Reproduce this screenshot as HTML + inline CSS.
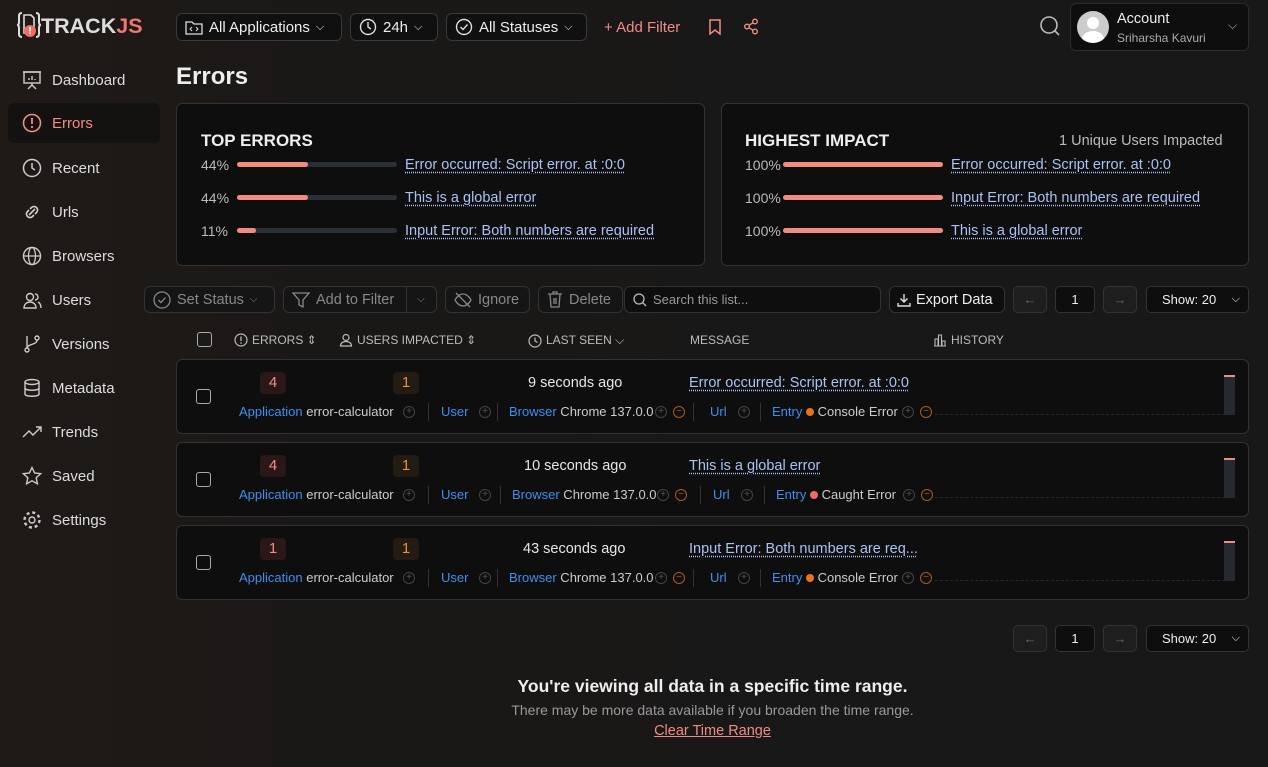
<!DOCTYPE html>
<html><head><meta charset="utf-8"><style>
*{box-sizing:border-box;margin:0;padding:0}
body{width:1268px;height:767px;overflow:hidden;background:linear-gradient(90deg,#201a17 0%,#1a1817 25%,#181818 100%);font-family:"Liberation Sans",sans-serif;color:#e6e6e6;position:relative;font-size:14px}
.a{position:absolute;white-space:nowrap}
.btn{position:absolute;border:1px solid #3a3a3a;border-radius:6px;background:#101010;display:flex;align-items:center;gap:6px;padding:0 8px;font-size:15px;color:#eee;height:28px;white-space:nowrap}
.nav{position:absolute;left:8px;width:152px;height:40px;display:flex;align-items:center;padding-left:14px;gap:10px;font-size:15px;color:#ddd;border-radius:6px}
.card{position:absolute;background:#0e0e0e;border:1px solid #333;border-radius:6px}
.lnk{color:#a9c3f5;text-decoration:underline dotted;text-underline-offset:3px}
.bar{position:absolute;height:5px;border-radius:3px;background:#2b2f36}
.bar i{display:block;height:5px;border-radius:3px;background:#f28b82}
.tb{position:absolute;border:1px solid #333;border-radius:6px;height:27px;display:flex;align-items:center;gap:6px;padding:0 8px;color:#888;font-size:14.5px;background:#151515;white-space:nowrap}
.th{position:absolute;top:333px;font-size:12px;color:#bbb;display:flex;align-items:center;gap:4px}
.cb{position:absolute;width:15px;height:15px;border:1.5px solid #aaa;border-radius:3px}
.m{position:absolute;font-size:13px;white-space:nowrap;color:#ccc}
.b{color:#3d8ff0}
.pc{position:absolute;width:12px;height:12px;border:1px solid #444;border-radius:50%;text-align:center;font-size:10px;line-height:10px;color:#555}
.mc{position:absolute;width:12px;height:12px;border:1px solid #b0581a;border-radius:50%;text-align:center;font-size:10px;line-height:10px;color:#b0581a}
.sep{position:absolute;width:1px;height:18px;background:#333}
.dot{display:inline-block;width:8px;height:8px;border-radius:50%;vertical-align:0}
.pg{position:absolute;height:27px;border:1px solid #333;border-radius:5px;display:flex;align-items:center;justify-content:center;font-size:13px}
</style></head><body>
<!-- logo -->
<div class="a" style="left:17px;top:11px;font-size:21.5px;font-weight:bold;color:#ddd">
<svg width="24" height="28" viewBox="0 0 24 28" style="vertical-align:-6px"><path d="M5 2 Q2 2 2 5 V11 Q2 14 0 14 Q2 14 2 17 V23 Q2 26 5 26" stroke="#ddd" stroke-width="2" fill="none"/><path d="M19 2 Q22 2 22 5 V11 Q22 14 24 14 Q22 14 22 17 V23 Q22 26 19 26" stroke="#ddd" stroke-width="2" fill="none"/><path d="M7 4 H14 L17 7 V22 H7Z" stroke="#ddd" stroke-width="1.6" fill="none"/><circle cx="13" cy="20" r="6" fill="#f06b62"/><rect x="12.2" y="16" width="1.6" height="4.5" fill="#fff"/><rect x="12.2" y="21.5" width="1.6" height="1.6" fill="#fff"/></svg><span>TRACK<span style="color:#f0766e">JS</span></span></div>
<!-- top bar -->
<div class="btn" style="left:176px;top:13px;width:166px"><svg width="18" height="16" viewBox="0 0 18 16"><path d="M1 3h6l2 2h8v10H1z" stroke="#ddd" fill="none" stroke-width="1.3"/><path d="M7 8l-2 2 2 2M11 8l2 2-2 2" stroke="#ddd" fill="none"/></svg>All Applications <span style="font-size:11px">⌵</span></div>
<div class="btn" style="left:350px;top:13px;width:88px"><svg width="18" height="18"><circle cx="9" cy="9" r="7.5" stroke="#ddd" fill="none" stroke-width="1.4"/><path d="M9 4v5l3 2" stroke="#ddd" fill="none" stroke-width="1.4"/></svg>24h <span style="font-size:11px">⌵</span></div>
<div class="btn" style="left:446px;top:13px;width:141px"><svg width="18" height="18"><circle cx="9" cy="9" r="7.5" stroke="#ddd" fill="none" stroke-width="1.4"/><path d="M5.5 9l2.5 2.5 4.5-5" stroke="#ddd" fill="none" stroke-width="1.4"/></svg>All Statuses <span style="font-size:11px">⌵</span></div>
<div class="a" style="left:604px;top:19px;color:#f28b82;font-size:15px">+ Add Filter</div>
<svg class="a" style="left:708px;top:19px" width="14" height="16"><path d="M2 1h10v14l-5-4-5 4z" stroke="#f28b82" fill="none" stroke-width="1.5"/></svg>
<svg class="a" style="left:743px;top:18px" width="16" height="17"><circle cx="12" cy="3.5" r="2.3" stroke="#f28b82" fill="none" stroke-width="1.4"/><circle cx="4" cy="8.5" r="2.3" stroke="#f28b82" fill="none" stroke-width="1.4"/><circle cx="12" cy="13.5" r="2.3" stroke="#f28b82" fill="none" stroke-width="1.4"/><path d="M6 7.3l4-2.5M6 9.7l4 2.5" stroke="#f28b82" stroke-width="1.4"/></svg>
<svg class="a" style="left:1039px;top:15px" width="22" height="22"><circle cx="10" cy="10" r="8" stroke="#bbb" fill="none" stroke-width="1.6"/><path d="M16 16l4 4" stroke="#bbb" stroke-width="1.6"/></svg>
<div class="a" style="left:1070px;top:3px;width:179px;height:48px;border:1px solid #2c2c2c;border-radius:6px;background:#0e0e0e"></div>
<div class="a" style="left:1077px;top:11px;width:32px;height:32px;border-radius:50%;background:#ccc;overflow:hidden"><div style="position:absolute;left:10px;top:6px;width:12px;height:12px;border-radius:50%;background:#fff"></div><div style="position:absolute;left:5px;top:20px;width:22px;height:16px;border-radius:50%;background:#fff"></div></div>
<div class="a" style="left:1117px;top:11px;font-size:14.5px;color:#eee">Account</div>
<div class="a" style="left:1117px;top:31px;font-size:12px;color:#aaa">Sriharsha Kavuri</div>
<div class="a" style="left:1228px;top:18px;font-size:12px;color:#aaa">⌵</div>
<!-- sidebar -->
<div class="nav" style="top:60px"><svg width="20" height="20"><rect x="2" y="2" width="16" height="11" stroke="#ccc" fill="none" stroke-width="1.4"/><path d="M1 2h18M10 13v2M6 19l4-4 4 4M7 10V8M10 10V6M13 10V9" stroke="#ccc" fill="none" stroke-width="1.4"/></svg>Dashboard</div>
<div class="nav" style="top:103px;background:#141211;color:#f28b82"><svg width="20" height="20"><circle cx="10" cy="10" r="8.5" stroke="#f28b82" fill="none" stroke-width="1.6"/><path d="M10 5v6" stroke="#f28b82" stroke-width="1.8"/><circle cx="10" cy="14" r="1.1" fill="#f28b82"/></svg>Errors</div>
<div class="nav" style="top:148px"><svg width="20" height="20"><circle cx="10" cy="10" r="8.5" stroke="#ccc" fill="none" stroke-width="1.5"/><path d="M10 5v5l3 2" stroke="#ccc" fill="none" stroke-width="1.5"/></svg>Recent</div>
<div class="nav" style="top:192px"><svg width="20" height="20"><path d="M7 13l6-6M8 7l1.5-1.5a3.5 3.5 0 015 5L13 12M12 13l-1.5 1.5a3.5 3.5 0 01-5-5L7 8" stroke="#ccc" fill="none" stroke-width="1.6"/></svg>Urls</div>
<div class="nav" style="top:236px"><svg width="20" height="20"><circle cx="10" cy="10" r="8.5" stroke="#ccc" fill="none" stroke-width="1.4"/><ellipse cx="10" cy="10" rx="3.5" ry="8.5" stroke="#ccc" fill="none" stroke-width="1.3"/><path d="M1.5 10h17" stroke="#ccc" stroke-width="1.3"/></svg>Browsers</div>
<div class="nav" style="top:280px"><svg width="20" height="20"><circle cx="8" cy="7" r="3.5" stroke="#ccc" fill="none" stroke-width="1.4"/><path d="M2 18c0-4 3-6 6-6s6 2 6 6zM13 4a3 3 0 010 6M16 12c2 1 3 3 3 6" stroke="#ccc" fill="none" stroke-width="1.4"/></svg>Users</div>
<div class="nav" style="top:324px"><svg width="20" height="20"><circle cx="5" cy="16" r="2" stroke="#ccc" fill="none" stroke-width="1.4"/><circle cx="15" cy="4" r="2" stroke="#ccc" fill="none" stroke-width="1.4"/><path d="M5 2v12M15 6c0 5-10 4-10 8" stroke="#ccc" fill="none" stroke-width="1.4"/></svg>Versions</div>
<div class="nav" style="top:368px"><svg width="20" height="20"><ellipse cx="10" cy="4" rx="7" ry="2.5" stroke="#ccc" fill="none" stroke-width="1.4"/><path d="M3 4v12c0 3 14 3 14 0V4M3 10c0 3 14 3 14 0" stroke="#ccc" fill="none" stroke-width="1.4"/></svg>Metadata</div>
<div class="nav" style="top:412px"><svg width="20" height="20"><path d="M1 15l6-6 4 4 8-8M14 5h5v5" stroke="#ccc" fill="none" stroke-width="1.4"/></svg>Trends</div>
<div class="nav" style="top:456px"><svg width="20" height="20"><path d="M10 1.5l2.6 5.5 6 .7-4.4 4.1 1.2 6L10 14.8 4.6 17.8l1.2-6L1.4 7.7l6-.7z" stroke="#ccc" fill="none" stroke-width="1.4"/></svg>Saved</div>
<div class="nav" style="top:500px"><svg width="20" height="20"><circle cx="10" cy="10" r="3" stroke="#ccc" fill="none" stroke-width="1.4"/><circle cx="10" cy="10" r="7.5" stroke="#ccc" fill="none" stroke-width="2.4" stroke-dasharray="3 2.9"/></svg>Settings</div>
<!-- title -->
<div class="a" style="left:176px;top:63px;font-size:24px;font-weight:bold;color:#eee">Errors</div>
<!-- top errors card -->
<div class="card" style="left:176px;top:103px;width:529px;height:163px"></div>
<div class="a" style="left:201px;top:131px;font-size:17px;font-weight:bold;color:#eee">TOP ERRORS</div>
<div class="a" style="left:201px;top:157px;color:#bbb">44%</div><div class="bar" style="left:237px;top:162px;width:160px"><i style="width:71px"></i></div><div class="a lnk" style="left:405px;top:157px;font-size:14.5px">Error occurred: Script error. at :0:0</div>
<div class="a" style="left:201px;top:190px;color:#bbb">44%</div><div class="bar" style="left:237px;top:195px;width:160px"><i style="width:71px"></i></div><div class="a lnk" style="left:405px;top:190px;font-size:14.5px">This is a global error</div>
<div class="a" style="left:201px;top:223px;color:#bbb">11%</div><div class="bar" style="left:237px;top:228px;width:160px"><i style="width:19px"></i></div><div class="a lnk" style="left:405px;top:223px;font-size:14.5px">Input Error: Both numbers are required</div>
<!-- highest impact -->
<div class="card" style="left:721px;top:103px;width:528px;height:163px"></div>
<div class="a" style="left:745px;top:131px;font-size:17px;font-weight:bold;color:#eee">HIGHEST IMPACT</div>
<div class="a" style="left:1059px;top:133px;color:#bbb;font-size:14.5px">1 Unique Users Impacted</div>
<div class="a" style="left:745px;top:157px;color:#bbb">100%</div><div class="bar" style="left:783px;top:162px;width:160px"><i style="width:160px"></i></div><div class="a lnk" style="left:951px;top:157px;font-size:14.5px">Error occurred: Script error. at :0:0</div>
<div class="a" style="left:745px;top:190px;color:#bbb">100%</div><div class="bar" style="left:783px;top:195px;width:160px"><i style="width:160px"></i></div><div class="a lnk" style="left:951px;top:190px;font-size:14.5px">Input Error: Both numbers are required</div>
<div class="a" style="left:745px;top:223px;color:#bbb">100%</div><div class="bar" style="left:783px;top:228px;width:160px"><i style="width:160px"></i></div><div class="a lnk" style="left:951px;top:223px;font-size:14.5px">This is a global error</div>
<!-- toolbar -->
<div class="tb" style="left:144px;top:286px;width:131px"><svg width="18" height="18"><circle cx="9" cy="9" r="8" stroke="#888" fill="none" stroke-width="1.3"/><path d="M5.5 9l2.5 2.5 4.5-5" stroke="#888" fill="none" stroke-width="1.3"/></svg>Set Status <span style="font-size:10px">⌵</span></div>
<div class="tb" style="left:283px;top:286px;width:154px"><svg width="18" height="18"><path d="M1 2h16l-6 7v7l-4-2V9z" stroke="#888" fill="none" stroke-width="1.3"/></svg>Add to Filter<span style="border-left:1px solid #333;height:27px;margin-left:6px;padding-left:10px;line-height:27px;font-size:10px">⌵</span></div>
<div class="tb" style="left:445px;top:286px;width:85px"><svg width="18" height="16"><path d="M1 8s3-6 8-6 8 6 8 6-3 6-8 6-8-6-8-6zM2 1l14 14" stroke="#888" fill="none" stroke-width="1.3"/></svg>Ignore</div>
<div class="tb" style="left:538px;top:286px;width:85px"><svg width="16" height="17"><path d="M1 3h14M6 3V1h4v2M3 3l1 13h8l1-13M7 7v6M9 7v6" stroke="#888" fill="none" stroke-width="1.3"/></svg>Delete</div>
<div class="tb" style="left:624px;top:286px;width:257px;background:#0e0e0e;font-size:13px;color:#999"><svg width="14" height="14"><circle cx="6" cy="6" r="5" stroke="#bbb" fill="none" stroke-width="1.3"/><path d="M10 10l3 3" stroke="#bbb" stroke-width="1.3"/></svg>Search this list...</div>
<div class="tb" style="left:889px;top:286px;width:116px;background:#0e0e0e;color:#eee;gap:5px;padding:0 7px;font-size:14.5px"><svg width="14" height="14"><path d="M7 1v8M3.5 5.5L7 9l3.5-3.5M1 10v3h12v-3" stroke="#ddd" fill="none" stroke-width="1.4"/></svg>Export Data</div>
<div class="pg" style="left:1013px;top:286px;width:34px;color:#666;background:#1e1e1e">←</div>
<div class="pg" style="left:1055px;top:286px;width:40px;background:#0e0e0e;color:#eee">1</div>
<div class="pg" style="left:1103px;top:286px;width:34px;color:#666;background:#1e1e1e">→</div>
<div class="pg" style="left:1146px;top:286px;width:103px;background:#0e0e0e;color:#eee;justify-content:space-between;padding:0 8px 0 15px">Show: 20 <span style="font-size:11px">⌵</span></div>
<!-- headers -->
<div class="cb" style="left:197px;top:332px"></div>
<div class="th" style="left:234px"><svg width="14" height="14"><circle cx="7" cy="7" r="6" stroke="#bbb" fill="none" stroke-width="1.2"/><path d="M7 3.5v4.5" stroke="#bbb" stroke-width="1.3"/><circle cx="7" cy="10" r=".8" fill="#bbb"/></svg>ERRORS ⇕</div>
<div class="th" style="left:339px"><svg width="14" height="14"><circle cx="7" cy="4.5" r="3" stroke="#bbb" fill="none" stroke-width="1.2"/><path d="M1.5 13c0-3 2.5-4.5 5.5-4.5s5.5 1.5 5.5 4.5z" stroke="#bbb" fill="none" stroke-width="1.2"/></svg>USERS IMPACTED ⇕</div>
<div class="th" style="left:528px"><svg width="14" height="14"><circle cx="7" cy="7" r="6" stroke="#bbb" fill="none" stroke-width="1.2"/><path d="M7 3.5V7l2.5 1.5" stroke="#bbb" fill="none" stroke-width="1.2"/></svg>LAST SEEN ⌵</div>
<div class="th" style="left:690px">MESSAGE</div>
<div class="th" style="left:933px"><svg width="14" height="14"><path d="M1 13h12M2 13V6h3v7M5.5 13V2h3v11M9 13V8h3v5" stroke="#bbb" fill="none" stroke-width="1.1"/></svg>HISTORY</div>
<!-- rows -->
<div class="card" style="left:176px;top:359px;width:1073px;height:75px"></div>
<div class="card" style="left:176px;top:442px;width:1073px;height:75px"></div>
<div class="card" style="left:176px;top:525px;width:1073px;height:75px"></div>

<div class="cb" style="left:196px;top:389px"></div>
<div class="a" style="left:260px;top:372px;width:26px;height:22px;border-radius:4px;background:#2a1818;color:#f28b82;font-size:15px;text-align:center;line-height:22px">4</div>
<div class="a" style="left:393px;top:372px;width:26px;height:22px;border-radius:4px;background:#241b12;color:#e8912e;font-size:15px;text-align:center;line-height:22px">1</div>
<div class="a" style="left:528px;top:375px;font-size:14.5px">9 seconds ago</div>
<div class="a lnk" style="left:689px;top:375px;font-size:14.5px">Error occurred: Script error. at :0:0</div>
<div class="m" style="left:239px;top:404px"><span class="b">Application</span> error-calculator</div>
<div class="pc" style="left:403px;top:406px">+</div><div class="sep" style="left:428px;top:403px"></div>
<div class="m b" style="left:441px;top:404px">User</div><div class="pc" style="left:479px;top:406px">+</div><div class="sep" style="left:497px;top:403px"></div>
<div class="m" style="left:509px;top:404px"><span class="b">Browser</span> Chrome 137.0.0</div>
<div class="pc" style="left:655px;top:406px">+</div><div class="mc" style="left:673px;top:406px">−</div><div class="sep" style="left:693px;top:403px"></div>
<div class="m b" style="left:710px;top:404px">Url</div><div class="pc" style="left:738px;top:406px">+</div><div class="sep" style="left:760px;top:403px"></div>
<div class="m" style="left:772px;top:404px"><span class="b">Entry</span> <span class="dot" style="background:#e8731a"></span> Console Error</div>
<div class="pc" style="left:902px;top:406px">+</div><div class="mc" style="left:920px;top:406px">−</div>

<div class="cb" style="left:196px;top:472px"></div>
<div class="a" style="left:260px;top:455px;width:26px;height:22px;border-radius:4px;background:#2a1818;color:#f28b82;font-size:15px;text-align:center;line-height:22px">4</div>
<div class="a" style="left:393px;top:455px;width:26px;height:22px;border-radius:4px;background:#241b12;color:#e8912e;font-size:15px;text-align:center;line-height:22px">1</div>
<div class="a" style="left:524px;top:458px;font-size:14.5px">10 seconds ago</div>
<div class="a lnk" style="left:689px;top:458px;font-size:14.5px">This is a global error</div>
<div class="m" style="left:239px;top:487px"><span class="b">Application</span> error-calculator</div>
<div class="pc" style="left:403px;top:489px">+</div><div class="sep" style="left:428px;top:486px"></div>
<div class="m b" style="left:441px;top:487px">User</div><div class="pc" style="left:479px;top:489px">+</div><div class="sep" style="left:500px;top:486px"></div>
<div class="m" style="left:512px;top:487px"><span class="b">Browser</span> Chrome 137.0.0</div>
<div class="pc" style="left:657px;top:489px">+</div><div class="mc" style="left:675px;top:489px">−</div><div class="sep" style="left:700px;top:486px"></div>
<div class="m b" style="left:713px;top:487px">Url</div><div class="pc" style="left:741px;top:489px">+</div><div class="sep" style="left:764px;top:486px"></div>
<div class="m" style="left:776px;top:487px"><span class="b">Entry</span> <span class="dot" style="background:#f06b62"></span> Caught Error</div>
<div class="pc" style="left:903px;top:489px">+</div><div class="mc" style="left:921px;top:489px">−</div>

<div class="cb" style="left:196px;top:555px"></div>
<div class="a" style="left:260px;top:538px;width:26px;height:22px;border-radius:4px;background:#2a1818;color:#f28b82;font-size:15px;text-align:center;line-height:22px">1</div>
<div class="a" style="left:393px;top:538px;width:26px;height:22px;border-radius:4px;background:#241b12;color:#e8912e;font-size:15px;text-align:center;line-height:22px">1</div>
<div class="a" style="left:523px;top:541px;font-size:14.5px">43 seconds ago</div>
<div class="a lnk" style="left:689px;top:541px;font-size:14.5px">Input Error: Both numbers are req...</div>
<div class="m" style="left:239px;top:570px"><span class="b">Application</span> error-calculator</div>
<div class="pc" style="left:403px;top:572px">+</div><div class="sep" style="left:428px;top:569px"></div>
<div class="m b" style="left:441px;top:570px">User</div><div class="pc" style="left:479px;top:572px">+</div><div class="sep" style="left:497px;top:569px"></div>
<div class="m" style="left:509px;top:570px"><span class="b">Browser</span> Chrome 137.0.0</div>
<div class="pc" style="left:655px;top:572px">+</div><div class="mc" style="left:673px;top:572px">−</div><div class="sep" style="left:693px;top:569px"></div>
<div class="m b" style="left:710px;top:570px">Url</div><div class="pc" style="left:738px;top:572px">+</div><div class="sep" style="left:760px;top:569px"></div>
<div class="m" style="left:772px;top:570px"><span class="b">Entry</span> <span class="dot" style="background:#e8731a"></span> Console Error</div>
<div class="pc" style="left:902px;top:572px">+</div><div class="mc" style="left:920px;top:572px">−</div>

<!-- history bars -->
<div class="a" style="left:935px;top:414px;width:290px;border-top:1px dashed #2a2a2a"></div>
<div class="a" style="left:1224px;top:375px;width:11px;height:40px;background:#262a30;border-top:2px solid #f28b82"></div>
<div class="a" style="left:935px;top:497px;width:290px;border-top:1px dashed #2a2a2a"></div>
<div class="a" style="left:1224px;top:458px;width:11px;height:40px;background:#262a30;border-top:2px solid #f28b82"></div>
<div class="a" style="left:935px;top:580px;width:290px;border-top:1px dashed #2a2a2a"></div>
<div class="a" style="left:1224px;top:541px;width:11px;height:40px;background:#262a30;border-top:2px solid #f28b82"></div>

<!-- bottom pagination -->
<div class="pg" style="left:1013px;top:625px;width:34px;color:#666;background:#1e1e1e">←</div>
<div class="pg" style="left:1055px;top:625px;width:40px;background:#0e0e0e;color:#eee">1</div>
<div class="pg" style="left:1103px;top:625px;width:34px;color:#666;background:#1e1e1e">→</div>
<div class="pg" style="left:1146px;top:625px;width:103px;background:#0e0e0e;color:#eee;justify-content:space-between;padding:0 8px 0 15px">Show: 20 <span style="font-size:11px">⌵</span></div>

<div class="a" style="left:176px;width:1073px;top:676px;text-align:center;font-size:17.5px;font-weight:bold;color:#eee">You're viewing all data in a specific time range.</div>
<div class="a" style="left:176px;width:1073px;top:702px;text-align:center;font-size:14px;color:#999">There may be more data available if you broaden the time range.</div>
<div class="a" style="left:176px;width:1073px;top:723px;text-align:center;font-size:14.5px;color:#f28b82;text-decoration:underline">Clear Time Range</div>
</body></html>
